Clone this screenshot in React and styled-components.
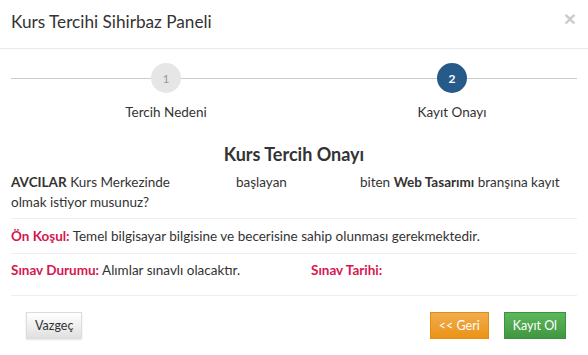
import React from "react";
import styled, { createGlobalStyle } from "styled-components";

const GlobalStyle = createGlobalStyle`
  html, body {
    margin: 0;
    padding: 0;
    background: #ffffff;
  }
  body {
    font-family: Lato, "Liberation Sans", sans-serif;
    font-size: 13.5px;
    color: #333333;
  }
  * {
    box-sizing: border-box;
  }
`;

const steps = [
  { no: 1, label: "Tercih Nedeni", active: false },
  { no: 2, label: "Kayıt Onayı", active: true },
];

const App = () => {
  return (
    <>
      <GlobalStyle />
      <Modal>
        <Header>
          <Title>Kurs Tercihi Sihirbaz Paneli</Title>
          <Close aria-label="Kapat">×</Close>
        </Header>

        <Body>
          <Stepper>
            <StepLine />
            {steps.map(step => (
              <Step key={step.no}>
                <Circle active={step.active}>{step.no}</Circle>
                <StepLabel>{step.label}</StepLabel>
              </Step>
            ))}
          </Stepper>

          <Heading>Kurs Tercih Onayı</Heading>

          <Para>
            <b>AVCILAR</b> Kurs Merkezinde<DateGap w={66} />başlayan<DateGap w={73} />biten{" "}
            <b>Web Tasarımı</b> branşına kayıt olmak istiyor musunuz?
          </Para>

          <InfoRow>
            <Label>Ön Koşul:</Label> Temel bilgisayar bilgisine ve becerisine sahip
            olunması gerekmektedir.
          </InfoRow>

          <InfoGrid>
            <div>
              <Label>Sınav Durumu:</Label> Alımlar sınavlı olacaktır.
            </div>
            <div>
              <Label>Sınav Tarihi:</Label>
            </div>
          </InfoGrid>
        </Body>

        <Footer>
          <Button variant="default">Vazgeç</Button>
          <Right>
            <Button variant="warning">&lt;&lt; Geri</Button>
            <Button variant="success">Kayıt Ol</Button>
          </Right>
        </Footer>
      </Modal>
    </>
  );
};

export default App;

const Modal = styled.div`
  width: 588px;
  height: 355px;
  background: #ffffff;
  overflow: hidden;
`;

const Header = styled.div`
  height: 49px;
  padding: 0 11px;
  display: flex;
  align-items: center;
  justify-content: space-between;
  border-bottom: 1px solid #e9e9e9;
`;

const Title = styled.h4`
  margin: 0;
  font-size: 17.2px;
  font-weight: 400;
  color: #333333;
  line-height: 20px;
  padding-bottom: 5px;
`;

const Close = styled.span`
  font-family: "Liberation Sans", sans-serif;
  font-size: 21px;
  font-weight: 700;
  line-height: 1;
  color: #000000;
  opacity: 0.2;
  margin-right: 1px;
  margin-bottom: 12px;
`;

const Body = styled.div`
  padding: 0 11px;
`;

const Stepper = styled.div`
  position: relative;
  display: grid;
  grid-template-columns: 95px 120px 166px 120px 1fr;
  padding-top: 14px;
  & > div:nth-of-type(2) {
    grid-column: 2;
  }
  & > div:nth-of-type(3) {
    grid-column: 4;
  }
`;

const StepLine = styled.div`
  position: absolute;
  left: 0;
  right: 0;
  top: 29px;
  height: 1px;
  background: #cccccc;
`;

const Step = styled.div`
  position: relative;
  display: flex;
  flex-direction: column;
  align-items: center;
  grid-row: 1;
`;

const Circle = styled.div`
  width: 30px;
  height: 30px;
  border-radius: 50%;
  display: flex;
  align-items: center;
  justify-content: center;
  font-size: 12px;
  font-weight: ${p => (p.active ? 700 : 400)};
  background: ${p => (p.active ? "#265a88" : "#e6e6e6")};
  color: ${p => (p.active ? "#ffffff" : "#999999")};
`;

const StepLabel = styled.div`
  margin-top: 9px;
  line-height: 20px;
  font-size: 13.5px;
  color: #333333;
  white-space: nowrap;
`;

const Heading = styled.h3`
  margin: 22px 0 0;
  text-align: center;
  font-size: 18px;
  font-weight: 700;
  line-height: 20px;
  color: #333333;
`;

const Para = styled.p`
  margin: 9px 0 0;
  padding-bottom: 6px;
  line-height: 19.5px;
  border-bottom: 1px solid #eeeeee;
  b {
    font-weight: 700;
  }
`;

const DateGap = styled.span`
  display: inline-block;
  width: ${p => p.w}px;
`;

const InfoRow = styled.div`
  padding: 7px 0;
  line-height: 20px;
  border-bottom: 1px solid #eeeeee;
`;

const InfoGrid = styled.div`
  display: grid;
  grid-template-columns: 300px 1fr;
  padding: 6px 0 15px;
  line-height: 20px;
  border-bottom: 1px solid #eeeeee;
`;

const Label = styled.b`
  color: #d6174f;
  font-weight: 700;
`;

const Footer = styled.div`
  display: flex;
  justify-content: space-between;
  align-items: center;
  padding: 16px 22px 0 26px;
`;

const Right = styled.div`
  display: flex;
  gap: 15px;
`;

const buttonTones = {
  default: {
    bg: "linear-gradient(to bottom, #ffffff 0%, #e0e0e0 100%)",
    border: "#dcdcdc",
    color: "#333333",
  },
  warning: {
    bg: "linear-gradient(to bottom, #f0ad4e 0%, #eb9316 100%)",
    border: "#e38d13",
    color: "#ffffff",
  },
  success: {
    bg: "linear-gradient(to bottom, #5cb85c 0%, #419641 100%)",
    border: "#3e8f3e",
    color: "#ffffff",
  },
};

const Button = styled.button`
  height: 27px;
  padding: 0 8px;
  font-family: Lato, "Liberation Sans", sans-serif;
  font-size: 12.5px;
  border-radius: 0;
  border: 1px solid ${p => buttonTones[p.variant].border};
  background: ${p => buttonTones[p.variant].bg};
  color: ${p => buttonTones[p.variant].color};
  box-shadow: ${p =>
    p.variant === "default" ? "0 1px 2px rgba(0, 0, 0, 0.1)" : "none"};
  cursor: pointer;
`;
